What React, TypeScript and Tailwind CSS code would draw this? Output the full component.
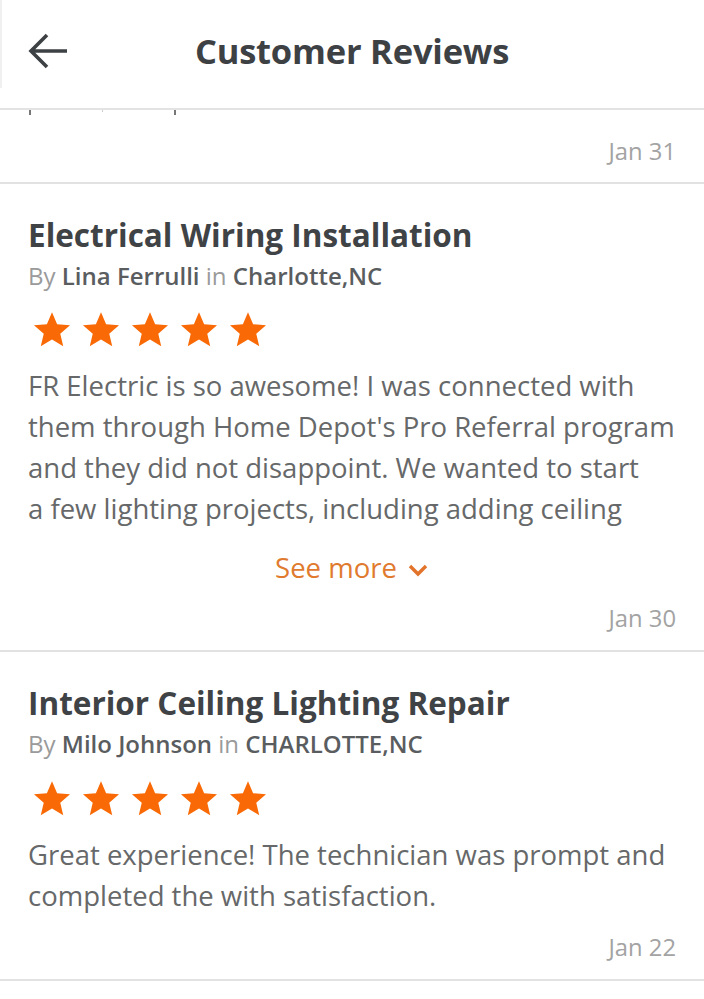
import React from "react";

const Star = () => (
  <svg width="40" height="38" viewBox="0 0 24 23" className="block">
    <path
      d="M12 0.8l3.1 7.2 7.8 0.6-5.9 5.1 1.8 7.6L12 17.3l-6.8 4 1.8-7.6-5.9-5.1 7.8-0.6z"
      fill="#f96a06"
    />
  </svg>
);

const Stars = () => (
  <div className="flex gap-[9px] pl-[32px]">
    <Star />
    <Star />
    <Star />
    <Star />
    <Star />
  </div>
);

type Review = {
  title: string;
  name: string;
  city: string;
  lines: string[];
  more?: boolean;
  date: string;
};

const reviews: Review[] = [
  {
    title: "Electrical Wiring Installation",
    name: "Lina Ferrulli",
    city: "Charlotte,NC",
    lines: [
      "FR Electric is so awesome! I was connected with",
      "them through Home Depot's Pro Referral program",
      "and they did not disappoint. We wanted to start",
      "a few lighting projects, including adding ceiling",
    ],
    more: true,
    date: "Jan 30",
  },
  {
    title: "Interior Ceiling Lighting Repair",
    name: "Milo Johnson",
    city: "CHARLOTTE,NC",
    lines: [
      "Great experience! The technician was prompt and",
      "completed the with satisfaction.",
    ],
    date: "Jan 22",
  },
];

function ReviewCard({ r }: { r: Review }) {
  return (
    <div className="border-b-2 border-[#e2e2e2]">
      <div className="pl-[28px] pt-[30px]">
        <h2 className="text-[31.5px] leading-[42px] font-bold text-[#3f4346]">{r.title}</h2>
        <div className="text-[24px] leading-[34px] mt-[3px]">
          <span className="text-[#9a9a9a]">By </span>
          <span className="font-semibold text-[#5a5d60]">{r.name}</span>
          <span className="text-[#9a9a9a]"> in </span>
          <span className="font-semibold text-[#5a5d60]">{r.city}</span>
        </div>
      </div>
      <div className={r.more ? "mt-[18px]" : "mt-[19px]"}>
        <Stars />
      </div>
      <div className="pl-[28px] pt-[16px] text-[27.5px] leading-[41px] text-[#666869]">
        {r.lines.map((l, i) => (
          <div key={i} className="whitespace-nowrap">
            {l}
          </div>
        ))}
      </div>
      {r.more && (
        <div className="flex justify-center items-center gap-[10px] mt-[22px] text-[27.5px] leading-[34px] text-[#e07a2e]">
          <span>See more</span>
          <svg width="22" height="14" viewBox="0 0 22 14" className="mt-[4px]">
            <path d="M3 3l8 8 8-8" stroke="#e2732a" strokeWidth="3.4" fill="none" />
          </svg>
        </div>
      )}
      <div
        className={
          "flex justify-end pr-[28px] pb-[16px] text-[23.8px] leading-[32px] text-[#a3a3a3] " +
          (r.more ? "pt-[17px]" : "pt-[15px]")
        }
      >
        {r.date}
      </div>
    </div>
  );
}

export default function App() {
  return (
    <div
      className="w-[704px] h-[999px] bg-white overflow-hidden"
      style={{ fontFamily: '"Open Sans", "Noto Sans", sans-serif' }}
    >
      <header className="relative h-[110px] pb-[6px] flex items-center justify-center border-b-2 border-[#e3e3e3]">
        <div className="absolute left-0 top-0 h-[88px] w-[2px] bg-[#f0f0f0]" />
        <svg
          width="44"
          height="42"
          viewBox="0 0 44 42"
          className="absolute left-[26px] top-[30px]"
        >
          <path
            d="M41 21H6M21 5L5 21l16 16"
            stroke="#3d4144"
            strokeWidth="3.6"
            fill="none"
          />
        </svg>
        <h1 className="text-[34.5px] font-bold text-[#3d4144] tracking-[-0.2px]">Customer Reviews</h1>
      </header>
      <div className="border-b-2 border-[#e2e2e2]">
        <div className="flex h-[5px]">
          <div className="ml-[29px] w-[2px] h-[5px] bg-[#777]" />
          <div className="ml-[71px] w-[1px] h-[2px] bg-[#ccc]" />
          <div className="ml-[71px] w-[2px] h-[5px] bg-[#777]" />
        </div>
        <div className="flex justify-end pr-[28px] pt-[20px] pb-[15px] text-[23.8px] leading-[32px] text-[#a3a3a3]">
          Jan 31
        </div>
      </div>
      {reviews.map((r, i) => (
        <ReviewCard key={i} r={r} />
      ))}
    </div>
  );
}
